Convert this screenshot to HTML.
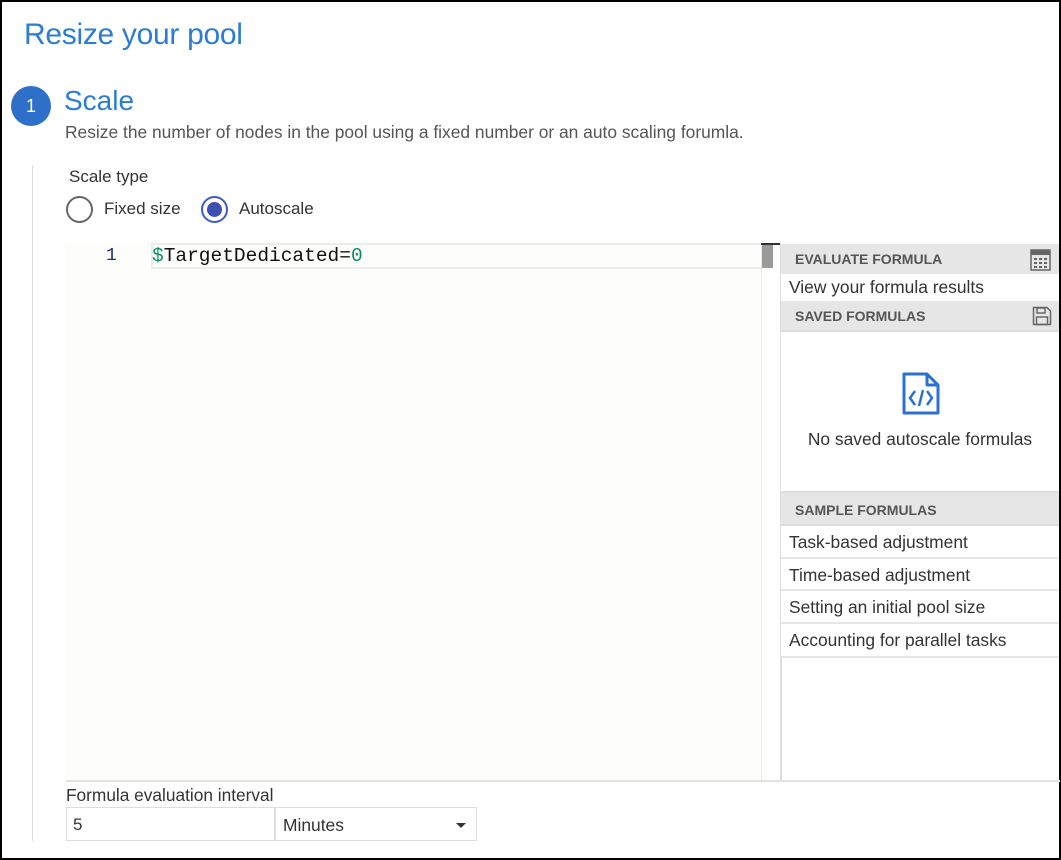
<!DOCTYPE html>
<html><head><meta charset="utf-8"><style>
*{margin:0;padding:0;box-sizing:border-box}
body{width:1061px;height:860px;overflow:hidden;background:#fff;font-family:"Liberation Sans",sans-serif;position:relative}
.frame{position:absolute;left:0;top:0;width:1061px;height:860px;border:2px solid #000}
.a{position:absolute;white-space:nowrap}
.hdr{position:absolute;left:781px;width:278px;background:#e6e6e6;font-weight:bold;font-size:14px;color:#555;padding-left:14px}
.item{position:absolute;left:781px;width:278px;border-bottom:2px solid #e6e6e6;font-size:17.4px;color:#333;padding-left:8px}
</style></head><body>
<div class="frame"></div>
<div class="a" style="left:24px;top:18px;font-size:30px;color:#2b7cd3;letter-spacing:-0.3px">Resize your pool</div>
<div class="a" style="left:11px;top:86px;width:40px;height:40px;border-radius:50%;background:#2e6fc9;color:#fff;font-size:18px;text-align:center;line-height:40px">1</div>
<div class="a" style="left:64px;top:85px;font-size:28px;color:#2b7cd3">Scale</div>
<div class="a" style="left:65px;top:122px;font-size:17.4px;color:#555">Resize the number of nodes in the pool using a fixed number or an auto scaling forumla.</div>
<div class="a" style="left:32px;top:165px;width:1px;height:676px;background:#ddd"></div>
<div class="a" style="left:69px;top:167px;font-size:17px;color:#333">Scale type</div>
<div class="a" style="left:66px;top:196px;width:27px;height:27px;border-radius:50%;border:2.5px solid #666"></div>
<div class="a" style="left:104px;top:199px;font-size:17px;color:#333">Fixed size</div>
<div class="a" style="left:201px;top:196px;width:27px;height:27px;border-radius:50%;border:2.5px solid #3d5bc6"></div>
<div class="a" style="left:207px;top:202px;width:15px;height:15px;border-radius:50%;background:#3d4fb5"></div>
<div class="a" style="left:239px;top:199px;font-size:17px;color:#333">Autoscale</div>
<!-- editor -->
<div class="a" style="left:66px;top:243px;width:695px;height:537px;background:#fdfdfc"></div>
<div class="a" style="left:151px;top:243px;width:610px;height:26px;border:2px solid #ececec;border-right:none"></div>
<div class="a" style="left:106px;top:244px;font-family:'Liberation Mono',monospace;font-size:18px;color:#1b2a7a;line-height:24px">1</div>
<div class="a" style="left:152px;top:244px;font-family:'Liberation Mono',monospace;font-size:19.5px;line-height:24px;color:#111"><span style="color:#0a9060">$</span>TargetDedicated=<span style="color:#0a9060">0</span></div>
<div class="a" style="left:761px;top:243px;width:1px;height:537px;background:#e8e8e8"></div>
<div class="a" style="left:761px;top:243px;width:19px;height:2px;background:#333"></div>
<div class="a" style="left:762px;top:245px;width:11px;height:23px;background:#9a9a9a"></div>
<div class="a" style="left:780px;top:243px;width:1px;height:537px;background:#ddd"></div>
<!-- right panel -->
<div class="hdr" style="top:244px;height:30px;line-height:30px">EVALUATE FORMULA</div>
<svg class="a" style="left:1030px;top:249px" width="21" height="22" viewBox="0 0 21 22"><rect x="1" y="1" width="19" height="20" fill="none" stroke="#666" stroke-width="1.5"/><rect x="1" y="1" width="19" height="5" fill="#666"/><g fill="#666"><rect x="4" y="9" width="3" height="2"/><rect x="9" y="9" width="3" height="2"/><rect x="14" y="9" width="3" height="2"/><rect x="4" y="13" width="3" height="2"/><rect x="9" y="13" width="3" height="2"/><rect x="14" y="13" width="3" height="2"/><rect x="4" y="17" width="3" height="2"/><rect x="9" y="17" width="3" height="2"/><rect x="14" y="17" width="3" height="2"/></g></svg>
<div class="a" style="left:789px;top:277px;font-size:17.4px;color:#333">View your formula results</div>
<div class="hdr" style="top:301px;height:31px;line-height:30px;border-bottom:2px solid #ddd">SAVED FORMULAS</div>
<svg class="a" style="left:1032px;top:306px" width="20" height="20" viewBox="0 0 20 20"><path d="M1.5 1.5H15L18.5 5V18.5H1.5Z" fill="none" stroke="#666" stroke-width="1.5"/><rect x="5" y="2" width="8" height="5" fill="none" stroke="#666" stroke-width="1.5"/><rect x="4.5" y="11" width="11" height="7.5" fill="none" stroke="#666" stroke-width="1.5"/></svg>
<svg class="a" style="left:902px;top:372px" width="38" height="43" viewBox="0 0 38 43"><path d="M2 2H25L36 13V41H2Z M25 2V13H36" fill="none" stroke="#2b72d0" stroke-width="3" stroke-linejoin="round"/><path d="M13 19L8 26L13 33M25 19L30 26L25 33M21 18L17 34" fill="none" stroke="#2b72d0" stroke-width="2.5"/></svg>
<div class="a" style="left:781px;width:278px;top:429px;text-align:center;font-size:17.4px;color:#333">No saved autoscale formulas</div>
<div class="hdr" style="top:491px;height:35px;line-height:35px;border-top:2px solid #ddd;border-bottom:2px solid #ddd">SAMPLE FORMULAS</div>
<div class="item" style="top:526px;height:33px;line-height:32px">Task-based adjustment</div>
<div class="item" style="top:559px;height:32px;line-height:32px">Time-based adjustment</div>
<div class="item" style="top:591px;height:33px;line-height:32px">Setting an initial pool size</div>
<div class="item" style="top:624px;height:34px;line-height:33px">Accounting for parallel tasks</div>
<div class="a" style="left:781px;top:658px;width:1px;height:122px;background:#ddd"></div>
<div class="a" style="left:66px;top:780px;width:994px;height:2px;background:#e2e2e2"></div>
<!-- bottom -->
<div class="a" style="left:66px;top:785px;font-size:17.3px;color:#333">Formula evaluation interval</div>
<div class="a" style="left:66px;top:807px;width:411px;height:34px;border:1.5px solid #ddd"></div>
<div class="a" style="left:274px;top:807px;width:1.5px;height:34px;background:#ddd"></div>
<div class="a" style="left:73px;top:815px;font-size:17px;color:#333">5</div>
<div class="a" style="left:283px;top:815px;font-size:17.4px;color:#333">Minutes</div>
<div class="a" style="left:456px;top:823px;width:0;height:0;border-left:5px solid transparent;border-right:5px solid transparent;border-top:5px solid #333"></div>
</body></html>
